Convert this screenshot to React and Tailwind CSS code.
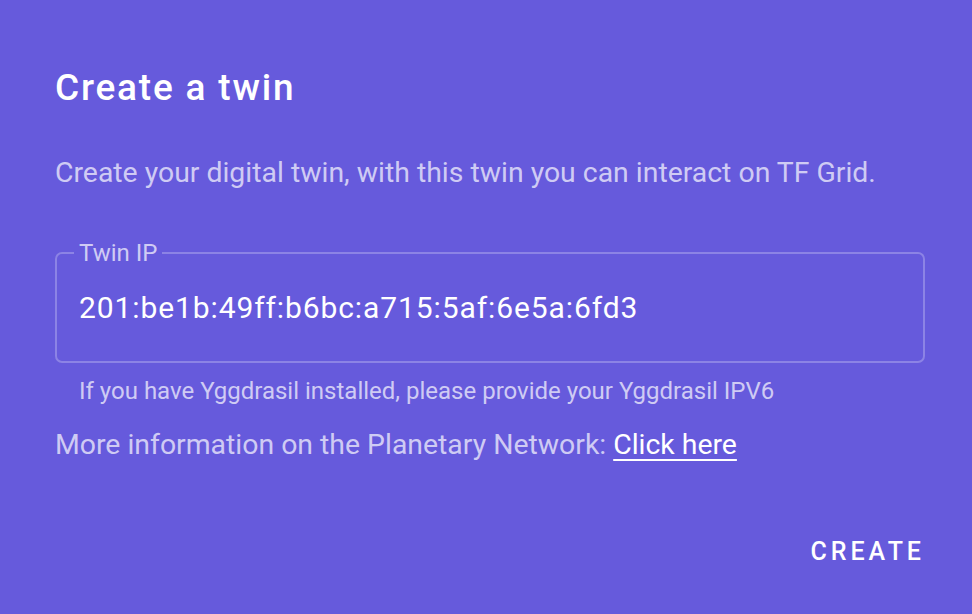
import React from 'react';

const App = () => {
  return (
    <div className="w-[972px] h-[614px] bg-[#665adc] text-white overflow-hidden" style={{ fontFamily: 'Roboto, sans-serif' }}>
      <div className="pl-[55px] pr-[47px] pt-[64px]">
        <h1 className="text-[37px] font-medium leading-[48px] tracking-[1.8px]">Create a twin</h1>
        <p className="mt-[43px] text-[28.4px] leading-[36px] text-white/70">
          Create your digital twin, with this twin you can interact on TF Grid.
        </p>

        {/* outlined text field */}
        <fieldset className="mt-[50px] h-[122px] border-2 border-white/25 rounded-[7px] px-[17px]">
          <legend className="px-[5px] text-[24px] leading-[24px] text-white/70">Twin IP</legend>
          <div className="text-[30px] leading-[40px] mt-[23px] pl-[5px] tracking-[0.9px]">201:be1b:49ff:b6bc:a715:5af:6e5a:6fd3</div>
        </fieldset>
        <div className="mt-[14px] pl-[24px] text-[24px] leading-[28px] text-white/70">
          If you have Yggdrasil installed, please provide your Yggdrasil IPV6
        </div>
        <p className="mt-[22px] text-[28.4px] leading-[36px] text-white/70">
          More information on the Planetary Network:{' '}
          <a href="#" className="text-white underline underline-offset-[5px]">Click here</a>
        </p>
        <div className="flex justify-end mt-[71px]">
          <button className="text-[25px] leading-[36px] font-medium tracking-[4px] uppercase">Create</button>
        </div>
      </div>
    </div>
  );
};

export default App;
